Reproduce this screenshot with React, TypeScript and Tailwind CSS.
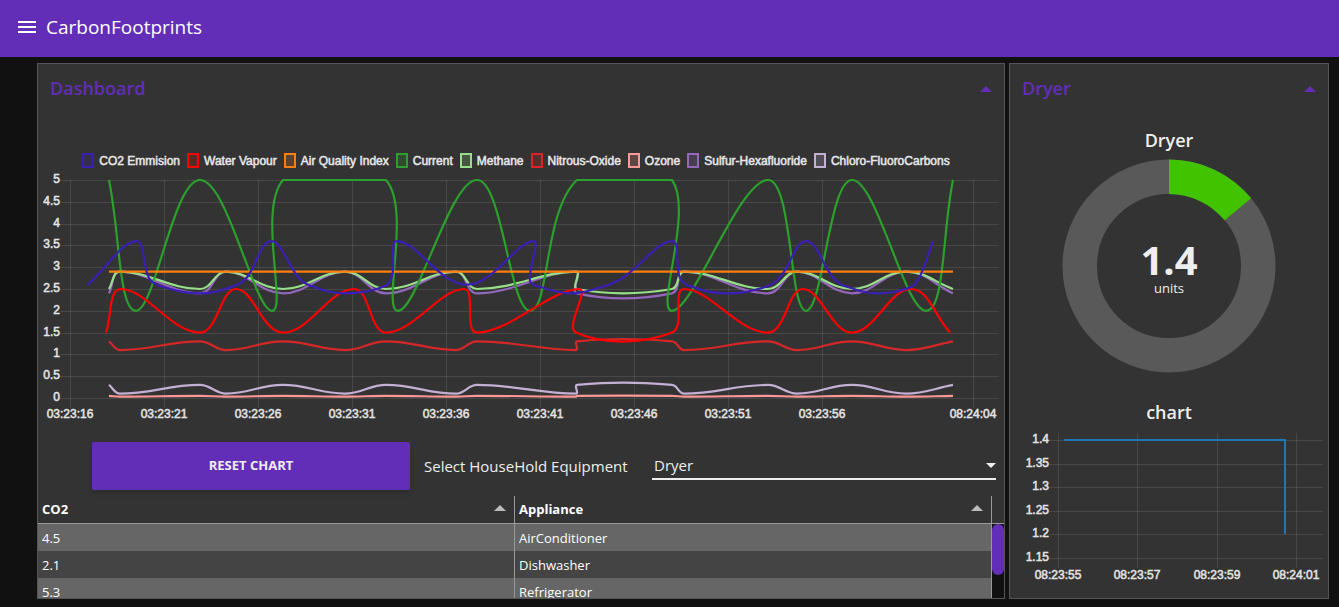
import React from "react";

type Point = { x: number; y: number };

const PLOT = { left: 32, right: 961, top: 10, bottom: 228, max: 5 };

const yAt = (value: number) =>
  PLOT.bottom - (value / PLOT.max) * (PLOT.bottom - PLOT.top);

const clamp = (v: number, lo: number, hi: number) => Math.min(hi, Math.max(lo, v));

/** Cardinal spline through the points, with control points kept inside the plot. */
function splinePath(points: Point[], tension = 0.4): string {
  const cap = (q: Point) => ({
    x: clamp(q.x, PLOT.left, PLOT.right),
    y: clamp(q.y, PLOT.top, PLOT.bottom),
  });
  const controls = points.map((p, i) => {
    const prev = points[i - 1] ?? p;
    const next = points[i + 1] ?? p;
    const d01 = Math.hypot(p.x - prev.x, p.y - prev.y);
    const d12 = Math.hypot(next.x - p.x, next.y - p.y);
    const total = d01 + d12 || 1;
    const fa = (tension * d01) / total;
    const fb = (tension * d12) / total;
    return {
      before: cap({ x: p.x - fa * (next.x - prev.x), y: p.y - fa * (next.y - prev.y) }),
      after: cap({ x: p.x + fb * (next.x - prev.x), y: p.y + fb * (next.y - prev.y) }),
    };
  });
  return points
    .map((p, i) => {
      if (i === 0) return `M${p.x} ${p.y}`;
      const a = controls[i - 1].after;
      const b = controls[i].before;
      return `C${a.x} ${a.y} ${b.x} ${b.y} ${p.x} ${p.y}`;
    })
    .join("");
}

const SAMPLE_X = [71, 82, 162, 188, 245, 307, 348, 418, 439, 538, 539, 634, 646, 730, 759, 814, 868, 915];

/** Readings alternate between two levels; the first level repeats across the long gap. */
const alternating = (first: number, second: number): [number, number][] =>
  SAMPLE_X.map((x, i) => {
    const step = i > 10 ? i - 1 : i;
    return [x, step % 2 === 0 ? first : second];
  });

type Series = { name: string; color: string; fill: string; data: [number, number][] };

const SERIES: Series[] = [
  {
    name: "CO2 Emmision", color: "#3b1fb5", fill: "#352f4d",
    data: [[50, 2.6], [98, 3.6], [111, 2.75], [122, 2.57], [162, 2.4], [195, 2.56], [208, 2.74], [233, 3.6], [261, 2.75], [273, 2.57], [307, 2.4], [347, 2.57], [354, 2.8], [360, 3.6], [429, 2.6], [495, 3.6], [492, 2.68], [502, 2.55], [532, 2.4], [560, 2.52], [583, 2.73], [634, 3.6], [642, 2.75], [653, 2.56], [687, 2.4], [725, 2.53], [741, 2.74], [768, 3.6], [796, 2.74], [808, 2.56], [839, 2.4], [870, 2.52], [880, 2.7], [895, 3.6]],
  },
  {
    name: "Water Vapour", color: "#ff0000", fill: "#5c2929",
    data: [[68, 1.5], [83, 2.5], [162, 1.5], [198, 2.5], [245, 1.5], [316, 2.5], [348, 1.5], [426, 2.5], [439, 1.5], [541, 2.5], [538, 1.5], [634, 1.5], [646, 2.5], [730, 1.5], [765, 2.5], [814, 1.5], [873, 2.5], [912, 1.5]],
  },
  { name: "Air Quality Index", color: "#ff7f0e", fill: "#5c422c", data: [[71, 2.9], [915, 2.9]] },
  {
    name: "Current", color: "#2ca02c", fill: "#324932",
    data: [[71, 5], [98, 2], [162, 5], [234, 2], [245, 5], [348, 5], [360, 2], [439, 5], [492, 2], [539, 5], [634, 5], [634, 2], [730, 5], [768, 2], [814, 5], [888, 2], [915, 5]],
  },
  { name: "Methane", color: "#98df8a", fill: "#475544", data: alternating(2.5, 2.9) },
  { name: "Nitrous-Oxide", color: "#d62728", fill: "#543131", data: alternating(1.3, 1.1) },
  { name: "Ozone", color: "#ff9896", fill: "#5c4747", data: alternating(0.05, 0.03) },
  { name: "Sulfur-Hexafluoride", color: "#9467bd", fill: "#463d4f", data: alternating(2.4, 2.9) },
  { name: "Chloro-FluoroCarbons", color: "#c5b0d5", fill: "#504c53", data: alternating(0.3, 0.1) },
];

const TIME_TICKS: [number, string][] = [
  [32, "03:23:16"], [126, "03:23:21"], [220, "03:23:26"], [314, "03:23:31"], [408, "03:23:36"],
  [502, "03:23:41"], [596, "03:23:46"], [690, "03:23:51"], [784, "03:23:56"], [935, "08:24:04"],
];
const VALUE_TICKS = [5, 4.5, 4, 3.5, 3, 2.5, 2, 1.5, 1, 0.5, 0];

const tickText = "fill-[#e4e4e4] stroke-[#e4e4e4] [stroke-width:0.5px] font-['Liberation_Sans',sans-serif] text-[12px]";

function EmissionsChart() {
  return (
    <svg viewBox="0 0 966 256" className="block w-full" role="img" aria-label="Emissions over time">
      <defs>
        <clipPath id="plot">
          <rect x="32" y="9" width="930" height="220" />
        </clipPath>
      </defs>
      <g stroke="#fff" strokeOpacity="0.1">
        {VALUE_TICKS.map((v) => (
          <line key={v} x1="22" x2="961" y1={Math.round(yAt(v)) + 0.5} y2={Math.round(yAt(v)) + 0.5} />
        ))}
        {TIME_TICKS.map(([x]) => (
          <line key={x} x1={x + 0.5} x2={x + 0.5} y1="10" y2="238" />
        ))}
      </g>
      <g clipPath="url(#plot)" fill="none" strokeWidth="2.2">
        {[...SERIES].reverse().map((s) => (
          <path key={s.name} d={splinePath(s.data.map(([x, v]) => ({ x, y: yAt(v) })))} stroke={s.color} />
        ))}
      </g>
      {VALUE_TICKS.map((v) => (
        <text key={v} x="22" y={Math.round(yAt(v)) + 3} textAnchor="end" className={tickText}>{v}</text>
      ))}
      {TIME_TICKS.map(([x, label]) => (
        <text key={x} x={x} y="248" textAnchor="middle" className={tickText}>{label}</text>
      ))}
    </svg>
  );
}

function ApplianceChart() {
  const values: [number, string][] = [[10, "1.4"], [34, "1.35"], [57, "1.3"], [81, "1.25"], [104, "1.2"], [128, "1.15"]];
  const times: [number, string][] = [[48, "08:23:55"], [127, "08:23:57"], [207, "08:23:59"], [286, "08:24:01"]];
  return (
    <svg viewBox="0 0 318 155" className="block w-full" role="img" aria-label="Dryer usage over time">
      <g stroke="#fff" strokeOpacity="0.1">
        {values.map(([y]) => (
          <line key={y} x1="39" x2="313" y1={y + 0.5} y2={y + 0.5} />
        ))}
        {times.map(([x]) => (
          <line key={x} x1={x + 0.5} x2={x + 0.5} y1="3" y2="138" />
        ))}
      </g>
      <path d="M54 10H275V104" fill="none" stroke="#1f77b4" strokeWidth="2" />
      {values.map(([y, label]) => (
        <text key={label} x="39" y={y + 3} textAnchor="end" className={tickText}>{label}</text>
      ))}
      {times.map(([x, label]) => (
        <text key={label} x={x} y="149" textAnchor="middle" className={tickText}>{label}</text>
      ))}
    </svg>
  );
}

function Gauge({ value, max }: { value: number; max: number }) {
  const r = 89.25;
  const length = 2 * Math.PI * r;
  return (
    <div className="relative mx-auto w-[214px]">
      <svg viewBox="0 0 214 214" className="block w-full" aria-hidden="true">
        <g fill="none" strokeWidth="34.5" transform="rotate(-90 107 107)">
          <circle cx="107" cy="107" r={r} stroke="#595959" />
          <circle cx="107" cy="107" r={r} stroke="#41c300" strokeDasharray={`${(value / max) * length} ${length}`} />
        </g>
      </svg>
      <div className="absolute inset-0 flex flex-col items-center justify-center pt-1">
        <span className="text-[40px] font-bold leading-10">{value}</span>
        <span className="text-[13px] leading-4">units</span>
      </div>
    </div>
  );
}

function Triangle({ className }: { className: string }) {
  return (
    <svg viewBox="0 0 12 6" className={className} aria-hidden="true">
      <path d="M0 6L6 0L12 6Z" fill="currentColor" />
    </svg>
  );
}

function CardHeader({ title }: { title: string }) {
  return (
    <div className="flex h-12 items-center justify-between px-3 text-[#622eb8]">
      <h2 className="text-lg font-semibold">{title}</h2>
      <button type="button" aria-label={`Collapse ${title}`} className="pt-0.5">
        <Triangle className="h-1.5 w-3" />
      </button>
    </div>
  );
}

const ROWS: [string, string][] = [
  ["4.5", "AirConditioner"],
  ["2.1", "Dishwasher"],
  ["5.3", "Refrigerator"],
];

function ApplianceTable() {
  return (
    <div className="flex h-[102px] overflow-hidden text-[13px] text-white">
      <table className="flex-1 table-fixed border-separate border-spacing-0">
        <thead>
          <tr>
            {["CO2", "Appliance"].map((name) => (
              <th key={name} scope="col" className="h-7 w-1/2 border-r border-b border-[#999] px-1 text-left font-bold">
                <div className="flex items-center justify-between pr-1">
                  {name}
                  <Triangle className="mb-1 h-1.5 w-3 text-[#bbb]" />
                </div>
              </th>
            ))}
          </tr>
        </thead>
        <tbody>
          {ROWS.map(([co2, name]) => (
            <tr key={name} className="bg-[#666] even:bg-[#444]">
              <td className="h-[27px] border-r border-[#999] px-1 pt-0.5">{co2}</td>
              <td className="h-[27px] border-r border-[#999] px-1 pt-0.5">{name}</td>
            </tr>
          ))}
        </tbody>
      </table>
      <div className="flex w-3 flex-col">
        <div className="h-7 shrink-0 border-b border-[#999]" />
        <div className="flex-1 bg-[#111]">
          <div className="h-[51px] rounded-full bg-[#622eb8]" />
        </div>
      </div>
    </div>
  );
}

export default function App() {
  return (
    <div className="min-h-screen bg-[#111] font-['Open_Sans',sans-serif] text-[#eee]">
      <header className="flex h-[57px] items-center gap-2.5 bg-[#622eb8] px-[18px] pb-1 text-white">
        <button type="button" aria-label="Menu">
          <svg viewBox="0 0 18 12" className="h-3 w-[18px]" fill="currentColor" aria-hidden="true">
            <path d="M0 0h18v2H0zM0 5h18v2H0zM0 10h18v2H0z" />
          </svg>
        </button>
        <h1 className="text-[19px] leading-7">CarbonFootprints</h1>
      </header>

      <main className="flex gap-1 pt-1.5 pr-2.5 pb-2 pl-[37px]">
        <section className="min-w-0 flex-1 border border-[#555] bg-[#333]">
          <CardHeader title="Dashboard" />
          <ul className="flex flex-wrap justify-center gap-[7px] pt-[41px] pr-2.5 pb-0.5 font-['Liberation_Sans',sans-serif] text-[12px] leading-[14px] [-webkit-text-stroke:0.5px_#e4e4e4]">
            {SERIES.map((s) => (
              <li key={s.name} className="flex items-center gap-[5px]">
                <span className="h-[15px] w-3 border-2" style={{ borderColor: s.color, backgroundColor: s.fill }} />
                {s.name}
              </li>
            ))}
          </ul>
          <EmissionsChart />

          <div className="flex items-center pt-4 pr-2 pb-1.5 pl-[54px]">
            <button type="button" className="h-12 w-[318px] rounded-xs bg-[#622eb8] text-[13px] font-bold shadow-md">
              RESET CHART
            </button>
            <label htmlFor="equipment" className="w-[242px] pl-3.5 text-[15px]">Select HouseHold Equipment</label>
            <div className="relative flex-1">
              <select id="equipment" defaultValue="Dryer" className="block h-7 w-full appearance-none border-b-2 border-[#eee] bg-transparent pl-0.5 text-[15px] leading-6 outline-none">
                <option>Dryer</option>
                <option>AirConditioner</option>
                <option>Dishwasher</option>
                <option>Refrigerator</option>
              </select>
              <svg viewBox="0 0 10 5" className="pointer-events-none absolute top-[11px] right-0 h-[5px] w-2.5" aria-hidden="true">
                <path d="M0 0H10L5 5Z" fill="#eee" />
              </svg>
            </div>
          </div>

          <ApplianceTable />
        </section>

        <section className="w-80 shrink-0 border border-[#555] bg-[#333]">
          <CardHeader title="Dryer" />
          <h3 className="pt-3.5 pb-[5px] text-center text-lg leading-7 font-semibold">Dryer</h3>
          <Gauge value={1.4} max={10} />
          <h3 className="pt-[25px] pb-1 text-center text-lg leading-7 font-semibold">chart</h3>
          <ApplianceChart />
        </section>
      </main>
    </div>
  );
}
